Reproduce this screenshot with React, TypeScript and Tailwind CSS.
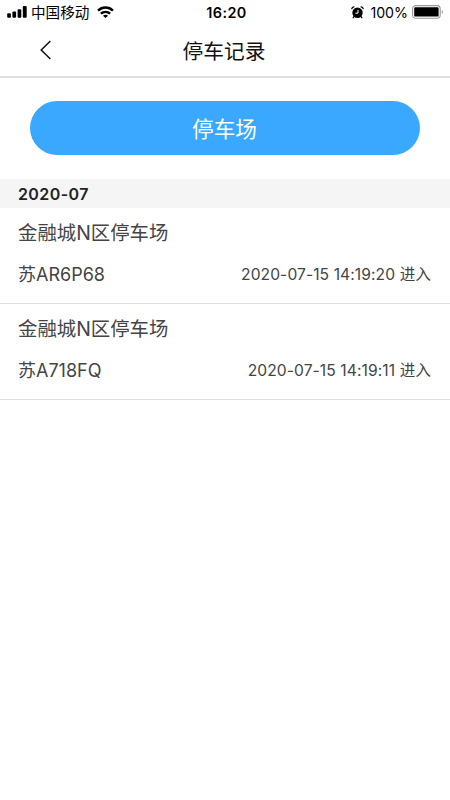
interface ParkingRecord {
  id: number;
  lot: string;
  plate: string;
  time: string;
  action: string;
}

const records: ParkingRecord[] = [
  { id: 1, lot: "金融城N区停车场", plate: "苏AR6P68", time: "2020-07-15 14:19:20", action: "进入" },
  { id: 2, lot: "金融城N区停车场", plate: "苏A718FQ", time: "2020-07-15 14:19:11", action: "进入" },
];

const SignalIcon = () => (
  <svg className="h-3 w-5" viewBox="0 0 20 12" fill="#000">
    <rect x="0.2" y="7.3" width="3.7" height="4.4" rx="0.9" />
    <rect x="5.4" y="5.6" width="3.7" height="6.1" rx="0.9" />
    <rect x="10.6" y="3.2" width="3.7" height="8.5" rx="0.9" />
    <rect x="15.8" y="0" width="3.9" height="11.7" rx="0.9" />
  </svg>
);

const WifiIcon = () => (
  <svg className="h-3 w-[17px]" viewBox="0 0 17 12" fill="none" stroke="#000" strokeWidth="2.4">
    <path d="M1 4.6C5.2 0.5 11.8 0.5 16 4.6" />
    <path d="M3.9 7.7C6.5 5.2 10.5 5.2 13.1 7.7" />
    <path d="M8.5 12L6 9.8C7.4 8.4 9.6 8.4 11 9.8Z" fill="#000" stroke="none" />
  </svg>
);

const AlarmIcon = () => (
  <svg className="h-[13px] w-[13px]" viewBox="0 0 13 13" fill="none">
    <circle cx="6.5" cy="6.8" r="5.2" fill="#000" />
    <path d="M3 10.6L2.2 11.7M10 10.6L10.8 11.7" stroke="#000" strokeWidth="1.3" strokeLinecap="round" />
    <path d="M0.8 2.7C1 1.6 1.8 0.9 2.9 0.8M12.2 2.7C12 1.6 11.2 0.9 10.1 0.8" stroke="#000" strokeWidth="1.3" strokeLinecap="round" />
    <path d="M7 4V7.2H4.4" stroke="#fff" strokeWidth="1" />
  </svg>
);

const BatteryIcon = () => (
  <svg className="h-[14px] w-8" viewBox="0 0 32 14">
    <rect x="0.6" y="0.6" width="27.6" height="12.6" rx="3.2" fill="#fff" stroke="#999" strokeWidth="1.1" />
    <rect x="2.2" y="2.2" width="24.4" height="9.4" rx="1.2" fill="#000" />
    <path d="M29.8 4.9C31.2 5.7 31.2 8.1 29.8 8.9Z" fill="#888" />
  </svg>
);

const StatusBar = () => (
  <div className="grid h-[25px] grid-cols-[1fr_auto_1fr] items-center pl-[7px] pr-[6px] text-black">
    <div className="flex items-center">
      <span className="pb-px">
        <SignalIcon />
      </span>
      <span className="ml-1 pt-px text-[14.6px] leading-6">中国移动</span>
      <span className="ml-2 pb-px">
        <WifiIcon />
      </span>
    </div>
    <span className="pl-0.5 text-[14.4px] font-semibold leading-6 tracking-[0.4px]">16:20</span>
    <div className="flex items-center justify-end">
      <span className="pb-px">
        <AlarmIcon />
      </span>
      <span className="ml-1.5 text-[14.2px] leading-6">100%</span>
      <span className="ml-1 pb-px">
        <BatteryIcon />
      </span>
    </div>
  </div>
);

const RecordItem = ({ record }: { record: ParkingRecord }) => (
  <li className="h-24 border-b border-[#dedede] pl-[18px] pr-[19px] pt-[11px] text-[#444]">
    <p className="text-[19.4px] leading-7">{record.lot}</p>
    <div className="mt-3.5 flex items-center justify-between leading-7">
      <span className="text-[18px]">{record.plate}</span>
      <span className="text-[15.6px] tracking-[0.09px]">
        {record.time} {record.action}
      </span>
    </div>
  </li>
);

export default function App() {
  return (
    <div className="min-h-screen bg-white font-['Inter','Noto_Sans_CJK_SC',sans-serif]">
      <StatusBar />

      <header className="grid h-[53px] grid-cols-[80px_1fr_80px] items-center border-b-2 border-[#e0e0e0]">
        <button type="button" aria-label="返回" className="pb-px pl-10">
          <svg className="h-5 w-3" viewBox="0 0 12 20" fill="none" stroke="#111" strokeWidth="1.5">
            <path d="M10.4 1L1.2 10L10.4 19" />
          </svg>
        </button>
        <h1 className="pr-0.5 pt-0.5 text-center text-[20.7px] leading-[30px] text-[#111]">停车记录</h1>
      </header>

      <div className="px-[30px] pb-6 pt-[23px]">
        <button type="button" className="h-[54px] w-full rounded-full bg-[#3aa8ff] pr-px pt-0.5 text-[21.6px] text-white">
          停车场
        </button>
      </div>

      <h2 className="h-[29px] bg-[#f5f5f5] px-[18px] text-base font-semibold leading-[30px] tracking-[0.4px] text-[#222]">2020-07</h2>
      <ul>
        {records.map((record) => (
          <RecordItem key={record.id} record={record} />
        ))}
      </ul>
    </div>
  );
}
